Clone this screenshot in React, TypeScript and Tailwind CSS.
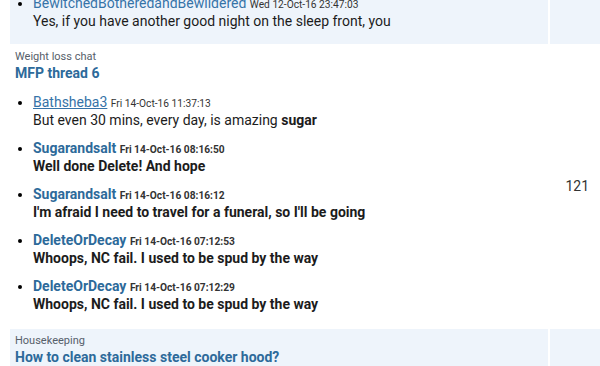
import React from "react";

type Item = { user: string; date: string; msg: React.ReactNode; bold?: boolean; underline?: boolean };

function Post({ it }: { it: Item }) {
  return (
    <li className="mb-[10px] text-[14px] leading-[18px]">
      <div className="h-[18px] whitespace-nowrap">
        <a
          className={
            (it.bold ? "font-bold text-[#2d6a9a] " : "text-[#3673a8] ") +
            (it.underline ? "underline decoration-[#3673a8] " : "") +
            "text-[14px] leading-[18px]"
          }
        >
          {it.user}
        </a>{" "}
        <span className={(it.bold ? "font-bold " : "") + "text-[10.2px] leading-[18px] text-[#333]"}>{it.date}</span>
      </div>
      <div className={(it.bold ? "font-bold " : "") + "h-[18px] text-[14px] leading-[18px] text-[#1c1c1c] whitespace-nowrap"}>
        {it.msg}
      </div>
    </li>
  );
}

const items: Item[] = [
  {
    user: "Bathsheba3",
    date: "Fri 14-Oct-16 11:37:13",
    msg: (
      <>
        But even 30 mins, every day, is amazing <b>sugar</b>
      </>
    ),
    underline: true,
  },
  { user: "Sugarandsalt", date: "Fri 14-Oct-16 08:16:50", msg: "Well done Delete! And hope", bold: true },
  {
    user: "Sugarandsalt",
    date: "Fri 14-Oct-16 08:16:12",
    msg: "I'm afraid I need to travel for a funeral, so I'll be going",
    bold: true,
  },
  { user: "DeleteOrDecay", date: "Fri 14-Oct-16 07:12:53", msg: "Whoops, NC fail. I used to be spud by the way", bold: true },
  { user: "DeleteOrDecay", date: "Fri 14-Oct-16 07:12:29", msg: "Whoops, NC fail. I used to be spud by the way", bold: true },
];

export default function App() {
  return (
    <div
      className="w-[600px] h-[366px] overflow-hidden bg-white"
      style={{ fontFamily: "Roboto, 'Liberation Sans', sans-serif" }}
    >
      <div className="mt-[-9px] pl-[10px] flex flex-col">
        {/* Row 1 */}
        <div className="flex gap-[2px]">
          <div className="flex-1 bg-[#eef4fb] pl-[5px] pt-[3px] pb-[4px]">
            <ul className="list-disc pl-[18px]">
              <Post
                it={{
                  user: "BewitchedBotheredandBewildered",
                  date: "Wed 12-Oct-16 23:47:03",
                  msg: "Yes, if you have another good night on the sleep front, you",
                }}
              />
            </ul>
          </div>
          <div className="w-[50px] bg-[#eef4fb]"></div>
        </div>
        {/* Row 2 */}
        <div className="flex gap-[2px]">
          <div className="flex-1 bg-white pl-[5px] pt-[6px] pb-[6px]">
            <div className="text-[11px] leading-[14px] text-[#56606a]">Weight loss chat</div>
            <div className="text-[14px] leading-[18px] font-bold text-[#2d6a9a]">MFP thread 6</div>
            <ul className="list-disc pl-[18px] mt-[11px]">
              {items.map((it, i) => (
                <Post key={i} it={it} />
              ))}
            </ul>
          </div>
          <div className="w-[50px] flex items-center justify-end pr-[11px] text-[14px] text-[#333]">121</div>
        </div>
        {/* Row 3 */}
        <div className="flex gap-[2px]">
          <div className="flex-1 bg-[#eef4fb] pl-[5px] pt-[5px] pb-[6px]">
            <div className="text-[11px] leading-[14px] text-[#56606a]">Housekeeping</div>
            <div className="text-[14px] leading-[18px] font-bold text-[#2d6a9a]">How to clean stainless steel cooker hood?</div>
          </div>
          <div className="w-[50px] bg-[#eef4fb]"></div>
        </div>
      </div>
    </div>
  );
}
